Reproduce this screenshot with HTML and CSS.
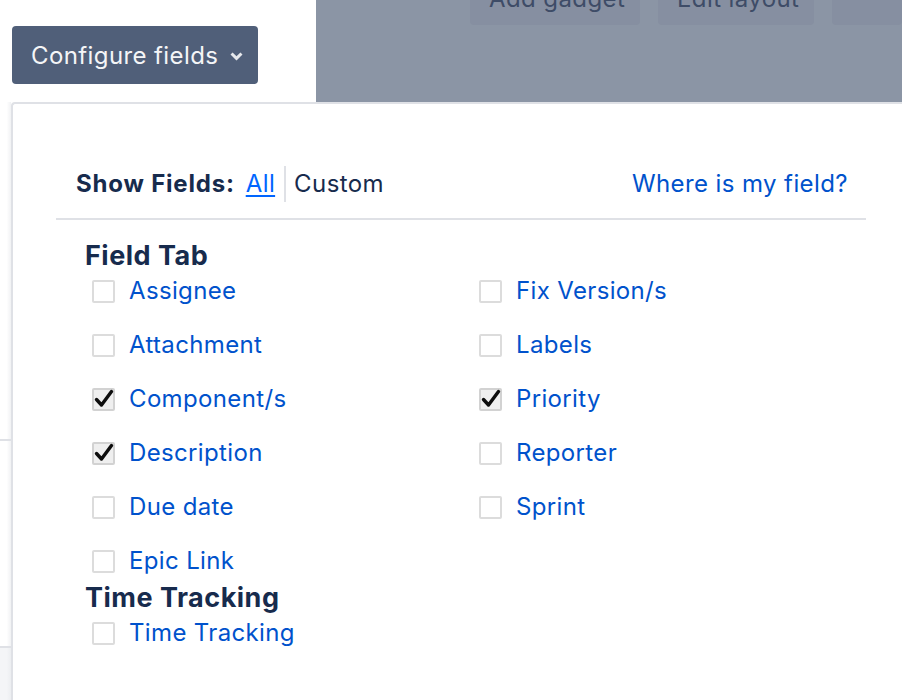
FILE: index.html
```html
<!DOCTYPE html>
<html>
<head>
<meta charset="utf-8">
<link rel="stylesheet" href="styles.css">
</head>
<body>
<div class="top">
  <div class="top-left">
    <button class="cfg">Configure fields
      <svg class="chev" width="13" height="9" viewBox="0 0 13 9"><path d="M0.5 2.6 L2.6 0.5 L6.5 4.3 L10.4 0.5 L12.5 2.6 L6.5 8.5 Z" fill="#e6e8ec"/></svg>
    </button>
  </div>
  <div class="overlay">
    <div class="toolbar">
      <span class="tb-btn b1">Add gadget</span>
      <span class="tb-btn b2">Edit layout</span>
      <span class="tb-btn b3"></span>
    </div>
  </div>
</div>
<div class="main">
  <div class="strip">
    <div class="s-a"></div>
    <div class="s-line"></div>
    <div class="s-b"></div>
    <div class="s-line"></div>
    <div class="s-c"></div>
  </div>
  <div class="panel">
    <div class="inner">
      <div class="head">
        <div class="show">
          <span class="show-label">Show Fields:</span>
          <a class="all">All</a>
          <span class="sep"></span>
          <span class="custom">Custom</span>
        </div>
        <a class="where">Where is my field?</a>
      </div>
      <div class="body">
        <h3 class="group first">Field Tab</h3>
        <div class="grid">
          <label class="item"><span class="cb"></span><span class="lbl">Assignee</span></label>
          <label class="item"><span class="cb"></span><span class="lbl">Attachment</span></label>
          <label class="item"><span class="cb on"><svg viewBox="0 0 22 22" width="22" height="22"><path d="M3.5 11.5 L8.5 17 L18.5 3.5" fill="none" stroke="#0d0d0d" stroke-width="3.4" stroke-linecap="round" stroke-linejoin="round"/></svg></span><span class="lbl">Component/s</span></label>
          <label class="item"><span class="cb on"><svg viewBox="0 0 22 22" width="22" height="22"><path d="M3.5 11.5 L8.5 17 L18.5 3.5" fill="none" stroke="#0d0d0d" stroke-width="3.4" stroke-linecap="round" stroke-linejoin="round"/></svg></span><span class="lbl">Description</span></label>
          <label class="item"><span class="cb"></span><span class="lbl">Due date</span></label>
          <label class="item"><span class="cb"></span><span class="lbl">Epic Link</span></label>
          <label class="item"><span class="cb"></span><span class="lbl">Fix Version/s</span></label>
          <label class="item"><span class="cb"></span><span class="lbl">Labels</span></label>
          <label class="item"><span class="cb on"><svg viewBox="0 0 22 22" width="22" height="22"><path d="M3.5 11.5 L8.5 17 L18.5 3.5" fill="none" stroke="#0d0d0d" stroke-width="3.4" stroke-linecap="round" stroke-linejoin="round"/></svg></span><span class="lbl">Priority</span></label>
          <label class="item"><span class="cb"></span><span class="lbl">Reporter</span></label>
          <label class="item"><span class="cb"></span><span class="lbl">Sprint</span></label>
        </div>
        <h3 class="group second">Time Tracking</h3>
        <div class="grid single">
          <label class="item"><span class="cb"></span><span class="lbl">Time Tracking</span></label>
        </div>
      </div>
    </div>
  </div>
</div>
</body>
</html>
```

FILE: styles.css
```css
* { box-sizing: border-box; }
html, body {
  margin: 0;
  padding: 0;
  background: #fff;
  width: 902px;
  height: 700px;
  overflow: hidden;
  font-family: "Inter", "Noto Sans", sans-serif;
  color: #172b4d;
}
.top {
  display: flex;
  height: 102px;
}
.top-left {
  width: 316px;
  padding: 26px 0 0 12px;
  background: #fff;
}
.cfg {
  display: flex;
  align-items: center;
  width: 246px;
  height: 58px;
  padding: 0 0 0 19px;
  border: none;
  border-radius: 4px;
  background: #505f79;
  color: #f4f5f7;
  font-family: "Inter", "Noto Sans", sans-serif;
  font-size: 24px;
  letter-spacing: 0.4px;
}
.chev { margin-left: 12px; margin-top: 3px; }
.overlay {
  flex: 1;
  background: #8b95a5;
  overflow: hidden;
}
.toolbar {
  display: flex;
  gap: 18px;
  padding-left: 154px;
  margin-top: -28px;
}
.tb-btn {
  height: 53px;
  line-height: 53px;
  border-radius: 4px;
  background: #868fa1;
  color: #3e4c67;
  font-size: 24px;
  letter-spacing: 0.4px;
  padding: 0 19px;
  white-space: nowrap;
}
.b1 { width: 170px; }
.b2 { width: 156px; }
.b3 { width: 70px; }
.main {
  display: flex;
  height: 598px;
}
.strip {
  width: 11px;
  display: flex;
  flex-direction: column;
  background: linear-gradient(to right, #fff 60%, #f1f2f4);
}
.s-a { height: 337px; }
.s-line { height: 2px; background: #dfe1e6; }
.s-b { height: 205px; }
.s-c { flex: 1; background: linear-gradient(to right, #f4f5f7 60%, #eceef1); }
.panel {
  flex: 1;
  border-left: 2px solid #dfe1e6;
  border-top: 2px solid #dfe1e6;
  border-top-left-radius: 4px;
  background: #fff;
}
.inner {
  margin-left: 43px;
  width: 810px;
}
.head {
  display: flex;
  justify-content: space-between;
  align-items: center;
  padding: 62px 18px 16px 20px;
  border-bottom: 2px solid #dfe1e6;
  line-height: 36px;
  font-size: 24px;
  letter-spacing: 0.4px;
}
.show { display: flex; align-items: center; }
.show-label { font-weight: 700; margin-right: 11px; letter-spacing: 0.8px; }
.all { color: #0065ff; text-decoration: underline; text-underline-offset: 3px; text-decoration-thickness: 1.5px; margin-right: 9px; }
.sep { width: 2px; height: 36px; background: #dfe1e6; margin-right: 8px; }
.custom { color: #172b4d; }
.where { color: #0052cc; }
.body { padding-left: 29px; }
.group {
  margin: 0 0 2px 0;
  font-size: 27px;
  line-height: 30px;
  font-weight: 700;
  letter-spacing: 0.5px;
  color: #172b4d;
}
.group.first { margin-top: 21px; }
.group.second { margin-top: 4px; }
.grid {
  display: grid;
  grid-template-columns: 387px 1fr;
  grid-template-rows: repeat(6, 36px);
  grid-auto-flow: column;
  row-gap: 18px;
}
.grid.single { grid-template-rows: 36px; }
.item {
  display: flex;
  align-items: center;
  gap: 14px;
  padding-left: 7px;
}
.cb {
  width: 23px;
  height: 23px;
  border: 2px solid #dcdcdc;
  border-radius: 2px;
  background: #fff;
  display: flex;
  align-items: center;
  justify-content: center;
  flex-shrink: 0;
}
.cb.on { background: #efefef; border-color: #d2d2d2; }
.cb svg { display: block; flex-shrink: 0; }
.lbl {
  color: #0052cc;
  font-size: 24px;
  line-height: 36px;
  letter-spacing: 0.35px;
}
```
